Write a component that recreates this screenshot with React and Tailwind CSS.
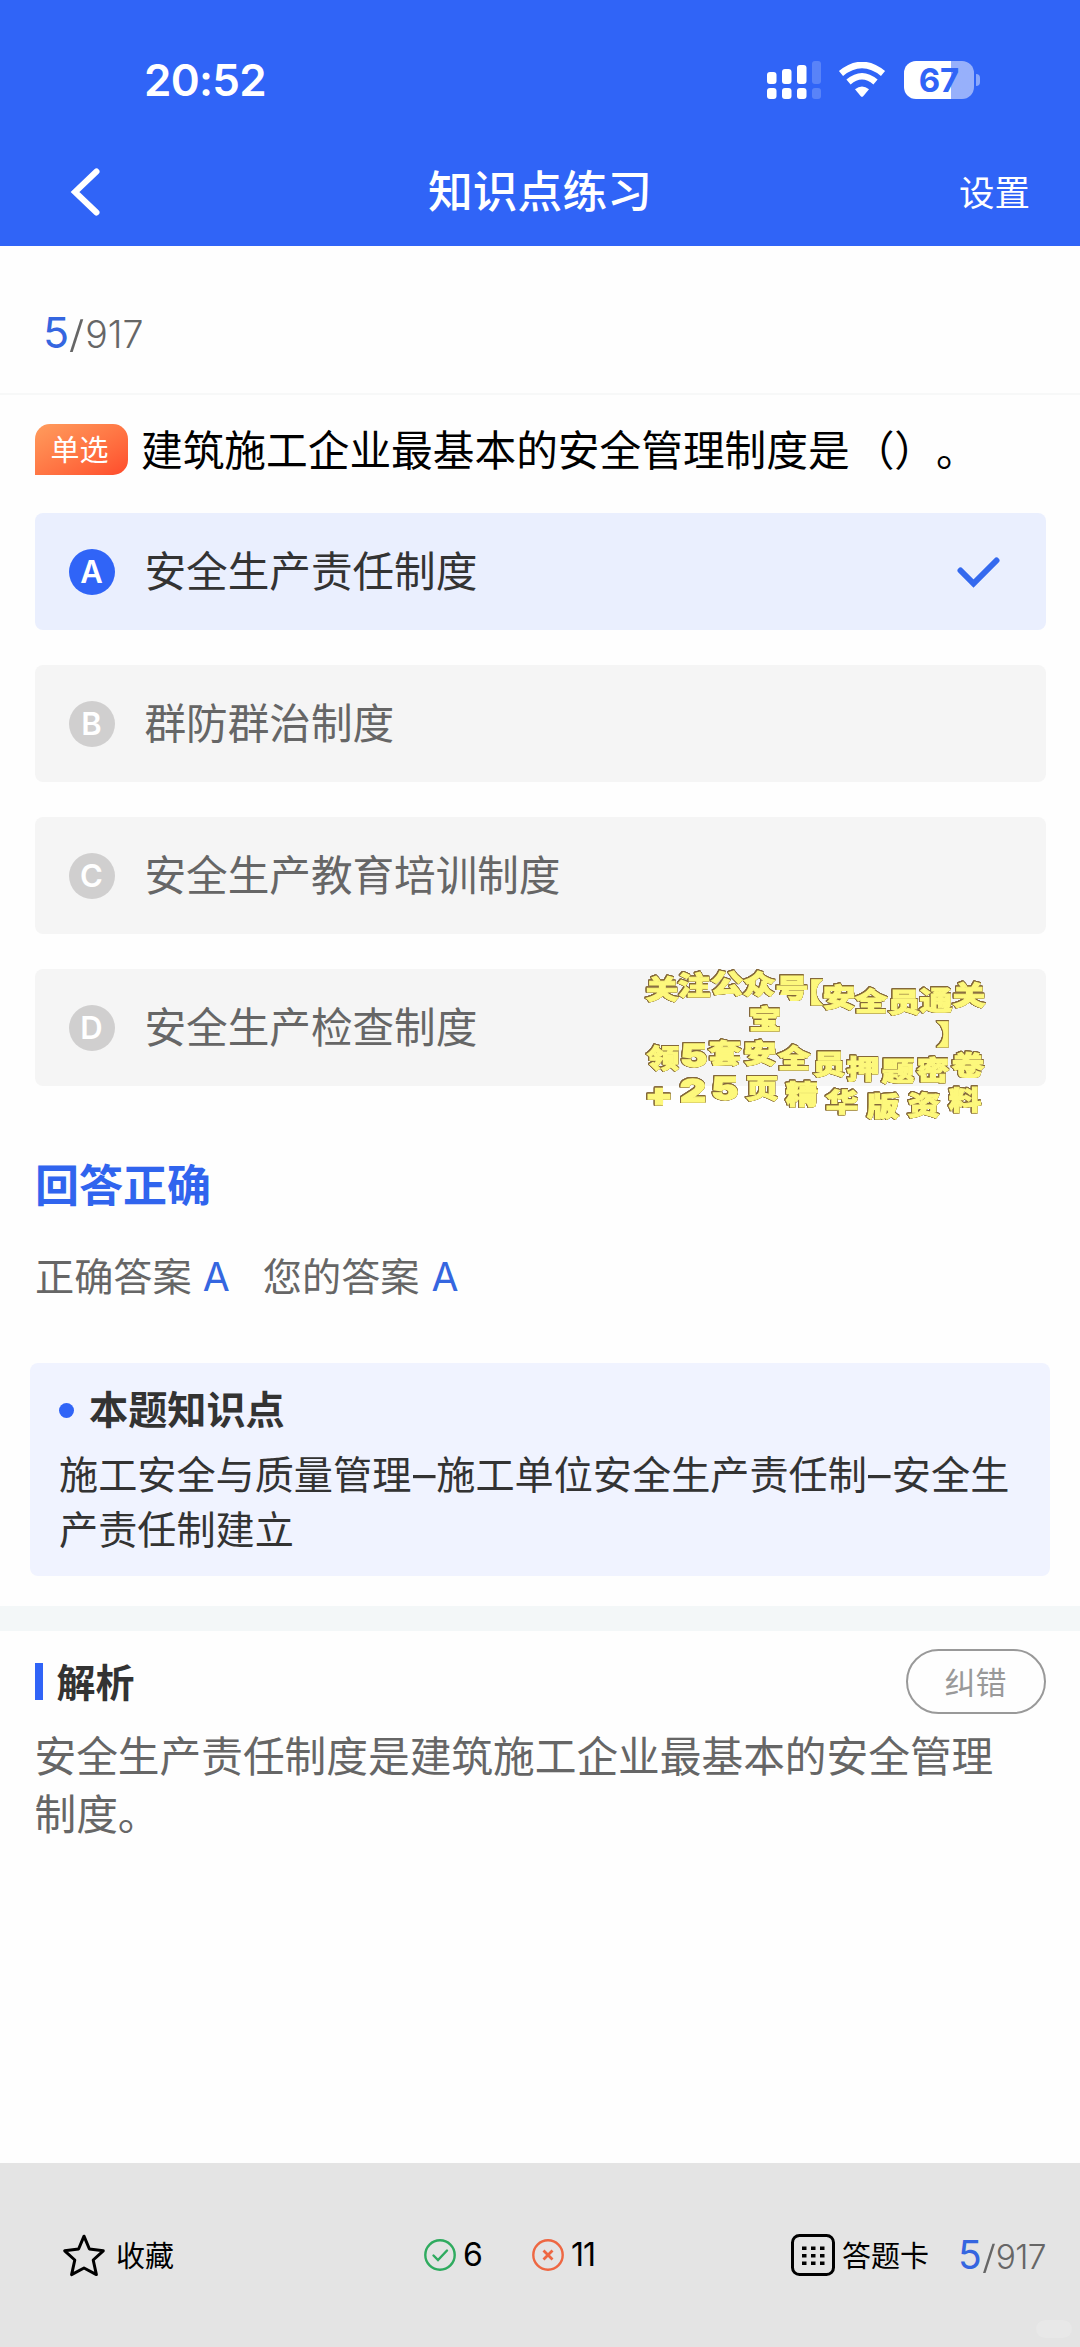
import clsx from "clsx";

const options = [
  { key: "A", label: "安全生产责任制度" },
  { key: "B", label: "群防群治制度" },
  { key: "C", label: "安全生产教育培训制度" },
  { key: "D", label: "安全生产检查制度" },
];

// [char, centerX, centerY] relative to the sticker box
const stickerChars = [
  ["关", 41, 39], ["注", 73, 35], ["公", 106, 33], ["众", 138, 34], ["号", 171, 38],
  ["【", 194, 42], ["安", 218, 47], ["全", 250, 51], ["员", 283, 52], ["通", 315, 50], ["关", 348, 45],
  ["宝", 144, 69], ["】", 324, 84],
  ["领", 42, 108], ["5", 73, 104], ["套", 104, 103], ["安", 139, 103], ["全", 173, 108],
  ["员", 208, 114], ["押", 242, 119], ["题", 277, 121], ["密", 312, 120], ["卷", 347, 115],
  ["+", 38, 143], ["2", 72, 139], ["5", 104, 137], ["页", 141, 138], ["精", 181, 144],
  ["华", 221, 152], ["版", 262, 156], ["资", 303, 155], ["料", 344, 150],
];

function SignalIcon() {
  return (
    <svg width="54" height="38" viewBox="0 0 54 38" fill="#fff">
      <rect x="0" y="11" width="9.5" height="12" rx="3" />
      <rect x="15" y="8" width="9.5" height="15" rx="3" />
      <rect x="30" y="4" width="9.5" height="19" rx="3" />
      <rect x="45" y="0" width="9" height="23" rx="3" opacity="0.2" />
      <rect x="0" y="27" width="9.5" height="11" rx="3" />
      <rect x="15" y="27" width="9.5" height="11" rx="3" />
      <rect x="30" y="27" width="9.5" height="11" rx="3" />
      <rect x="45" y="27" width="9" height="11" rx="3" opacity="0.2" />
    </svg>
  );
}

function WifiIcon() {
  return (
    <svg width="48" height="36" viewBox="0 0 48 36" fill="none">
      <path d="M3 11.5Q24 -5.5 45 11.5" stroke="#fff" strokeWidth="6.5" />
      <path d="M10.5 20Q24 8.5 37.5 20" stroke="#fff" strokeWidth="6.5" />
      <path d="M17 27.3Q24 21.5 31 27.3L25.2 34.2Q24 35.4 22.8 34.2Z" fill="#fff" />
    </svg>
  );
}

function Battery() {
  return (
    <div className="flex items-center gap-[2px]">
      <div className="flex h-[38px] w-[70px] items-center justify-center rounded-[12px] bg-linear-to-r from-white from-67% to-[#97b0fb] to-67%">
        <span className="text-[33px] leading-none font-bold text-[#3064f7]">67</span>
      </div>
      <div className="h-[12px] w-[4px] rounded-r-full bg-[#8ba8fb]" />
    </div>
  );
}

function Header() {
  return (
    <header className="h-[246px] shrink-0 bg-[#3064f7] text-white">
      <div className="flex h-[160px] items-center justify-between pr-[100px] pl-[144px]">
        <span className="text-[44px] leading-none font-semibold tracking-[-0.7px]">20:52</span>
        <div className="flex items-center">
          <SignalIcon />
          <div className="ml-[17px]">
            <WifiIcon />
          </div>
          <div className="ml-[18px]">
            <Battery />
          </div>
        </div>
      </div>
      <div className="grid h-[64px] grid-cols-3 items-center pr-[50px] pl-[70px]">
        <svg width="32" height="50" viewBox="0 0 32 50" fill="none">
          <path d="M26.5 4.5L5 25L26.5 45.5" stroke="#fff" strokeWidth="6" strokeLinecap="round" />
        </svg>
        <h1 className="-ml-[20px] text-center text-[44.8px] leading-none font-medium">知识点练习</h1>
        <span className="pt-[4px] text-right text-[35.5px] leading-none">设置</span>
      </div>
    </header>
  );
}

function Option({ option, selected }) {
  return (
    <li
      className={clsx(
        "flex h-[117px] items-center rounded-[8px] pr-[46px] pl-[34px]",
        selected ? "bg-[#eaeffe]" : "bg-[#f5f5f5]"
      )}
    >
      <span
        className={clsx(
          "flex size-[46px] items-center justify-center rounded-full text-[31px] leading-none font-semibold text-white",
          selected ? "bg-[#3064f7]" : "bg-[#d0cfcf]"
        )}
      >
        {option.key}
      </span>
      <span
        className={clsx(
          "ml-[30px] flex-1 pt-[3px] text-[41.6px] leading-none",
          selected ? "text-[#333]" : "text-[#666]"
        )}
      >
        {option.label}
      </span>
      {selected && (
        <svg width="44" height="32" viewBox="0 0 44 32" fill="none">
          <path d="M4.5 14.5L17.5 27.5L40.5 4.5" stroke="#3469ee" strokeWidth="6" strokeLinecap="round" />
        </svg>
      )}
    </li>
  );
}

function Sticker() {
  return (
    <div className="absolute top-[951px] left-[621px] h-[190px] w-[400px] text-[#fdf87c] filter-[drop-shadow(0.9px_0_0_#84683a)_drop-shadow(-0.9px_0_0_#84683a)_drop-shadow(0_0.9px_0_#84683a)_drop-shadow(0_-0.9px_0_#84683a)]">
      {stickerChars.map(([char, x, y], i) => (
        <span
          key={i}
          className={clsx(
            "absolute flex -translate-1/2 items-center justify-center leading-none font-black [-webkit-text-stroke:1.3px_#fdf87c]",
            /[\d+]/.test(char) ? "scale-x-130 text-[31px]" : "scale-y-[0.82] text-[32.5px]",
            /[【】]/.test(char) && "[font-feature-settings:'halt']"
          )}
          style={{ left: x, top: y }}
        >
          {char}
        </span>
      ))}
    </div>
  );
}

function Footer() {
  return (
    <footer className="relative flex h-[184px] shrink-0 items-center bg-[#e4e4e4] pl-[62px] text-[29px] leading-none text-black">
      <div className="flex w-[362px] items-center">
        <svg width="44" height="44" viewBox="0 0 44 44" fill="none">
          <path
            d="M22 3.2L27.4 16L41.3 17.8L31.2 27L34.4 41.6L22 35L9.6 41.6L12.8 27L2.7 17.8L16.6 16Z"
            stroke="#000"
            strokeWidth="3"
            strokeLinejoin="round"
          />
        </svg>
        <span className="ml-[10px] pt-[2px]">收藏</span>
      </div>
      <div className="flex w-[108px] items-center">
        <svg width="32" height="32" viewBox="0 0 32 32" fill="none" stroke="#2fab5f" strokeWidth="2.4">
          <circle cx="16" cy="16" r="14.7" />
          <path d="M9.5 16.5L14 21L23 11.5" strokeLinecap="round" />
        </svg>
        <span className="ml-[7px] text-[32px]">6</span>
      </div>
      <div className="flex w-[258px] items-center">
        <svg width="32" height="32" viewBox="0 0 32 32" fill="none" stroke="#ee6742" strokeWidth="2.4">
          <circle cx="16" cy="16" r="14.7" />
          <path d="M11.5 11.5L20.5 20.5M20.5 11.5L11.5 20.5" strokeWidth="2.8" />
        </svg>
        <span className="ml-[7px] text-[32px] tracking-[-1px]">11</span>
      </div>
      <svg width="46" height="44" viewBox="0 0 46 44" fill="none">
        <rect x="2.5" y="2.5" width="41" height="39" rx="7" stroke="#000" strokeWidth="3" />
        {[13.5, 21, 28.5].map((y) =>
          [12, 21, 30].map((x) => (
            <rect key={`${x}-${y}`} x={x} y={y} width="4.5" height="3.5" fill="#000" />
          ))
        )}
      </svg>
      <span className="ml-[6px] pt-[2px]">答题卡</span>
      <Counter className="ml-[29px] text-[39px]" totalClass="text-[33.5px] tracking-[-0.7px]" />
      {/* faint mark in the corner */}
      <div className="absolute right-[8px] bottom-[9px] h-[18px] w-[36px] rounded-full bg-white/15" />
    </footer>
  );
}

function Counter({ className, totalClass }) {
  return (
    <div className={clsx("flex items-baseline leading-none", className)}>
      <span className="text-[#3566e0]">5</span>
      <span className={clsx("ml-[1px] font-light text-[#666]", totalClass)}>
        <span className="mr-[2px] inline-block scale-x-120">/</span>917
      </span>
    </div>
  );
}

function Dash() {
  return <span className="mx-[1.5px] inline-block w-[22px] origin-left scale-x-115">–</span>;
}

export default function App() {
  return (
    <div
      lang="zh-CN"
      className="relative flex h-[2347px] w-[1080px] flex-col overflow-hidden bg-[#fefefe] font-[Inter,'Noto_Sans_CJK_SC',sans-serif] [text-spacing-trim:space-all]"
    >
      <Header />

      <div className="flex h-[149px] shrink-0 items-center border-b-2 border-[#f7f8f8] pt-[26px] pl-[43px]">
        <Counter className="text-[43px]" totalClass="text-[37.5px]" />
      </div>

      <main className="flex-1">
        {/* Question */}
        <section className="px-[34.5px] pt-[29px]">
          <div className="flex h-[51px] items-center">
            <span className="flex h-[51px] w-[93px] items-center justify-center rounded-[15px] rounded-bl-none bg-linear-to-br from-[#ff9c5d] to-[#ff4a2b] pt-[1px] pr-[3px] text-[29px] leading-none text-white">
              单选
            </span>
            <p className="ml-[13.5px] pt-[5px] text-[41.7px] leading-none whitespace-nowrap text-black">
              建筑施工企业最基本的安全管理制度是<span className="ml-[3px]">（）。</span>
            </p>
          </div>
          <ul className="mt-[38px] flex flex-col gap-[35px]">
            {options.map((option) => (
              <Option key={option.key} option={option} selected={option.key === "A"} />
            ))}
          </ul>
        </section>

        {/* Result */}
        <section className="px-[35px] pt-[77px]">
          <h2 className="text-[44px] leading-[46px] font-bold text-[#3064ee]">回答正确</h2>
          <div className="mt-[46px] flex text-[39.2px] leading-[44px] text-[#666]">
            <span>正确答案</span>
            <span className="ml-[11px] text-[#3566e0]">A</span>
            <span className="ml-[33px]">您的答案</span>
            <span className="ml-[12px] text-[#3566e0]">A</span>
          </div>
        </section>

        <section className="mx-[30px] mt-[64px] h-[213px] rounded-[8px] bg-[#f0f3ff] px-[29px] pt-[24px] text-[39.15px] text-[#333]">
          <h3 className="flex items-center leading-[46px] font-bold">
            <span className="mr-[15px] size-[15px] rounded-full bg-[#3064f7]" />
            本题知识点
          </h3>
          <p className="mt-[15px] leading-[54.5px] whitespace-nowrap">
            施工安全与质量管理
            <Dash />
            施工单位安全生产责任制
            <Dash />
            安全生
            <br />
            产责任制建立
          </p>
        </section>

        <div className="mt-[30px] h-[25px] bg-[#f3f7f8]" />

        {/* Analysis */}
        <section className="px-[34.5px] pt-[17px]">
          <div className="flex h-[66px] items-center">
            <span className="h-[37px] w-[8px] bg-[#3064f7]" />
            <h3 className="ml-[14px] flex-1 pt-[2px] text-[39px] leading-none font-bold text-[#333]">解析</h3>
            <button className="h-[65px] w-[140px] rounded-full border-2 border-[#999] pt-[2px] text-[31px] leading-none text-[#999]">
              纠错
            </button>
          </div>
          <p className="mt-[14px] pr-[45px] text-[41.7px] leading-[58px] text-[#666]">
            安全生产责任制度是建筑施工企业最基本的安全管理制度。
          </p>
        </section>
      </main>

      <Footer />
      <Sticker />
    </div>
  );
}
